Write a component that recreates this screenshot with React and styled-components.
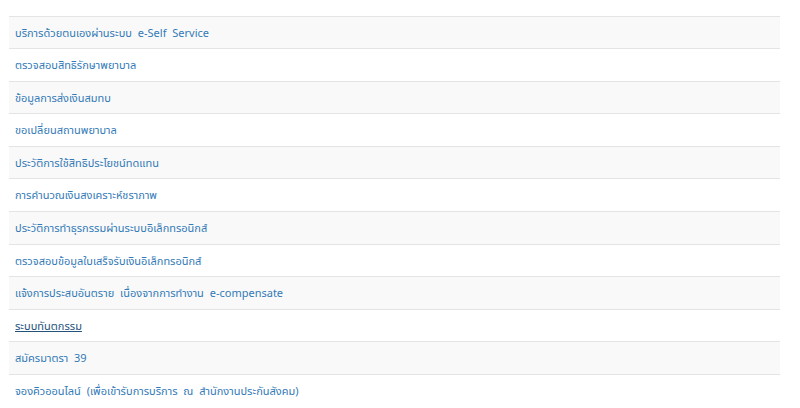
import React from "react";
import styled, { createGlobalStyle } from "styled-components";

const Global = createGlobalStyle`
  html, body { margin: 0; padding: 0; background: #fff; }
  body { font-family: "Noto Sans", "Noto Sans Thai", "Loma", sans-serif; }
`;

const Page = styled.div`
  padding: 15.5px 20px 0 9px;
`;

const List = styled.div`
  width: 771px;
  display: flex;
  flex-direction: column;
`;

const Row = styled.div`
  border-top: 1px solid #e4e4e4;
  background: ${(p) => (p.$odd ? "#f9f9f9" : "#ffffff")};
  padding: 8px 6px;
  line-height: 15.6px;
  font-size: 11px;
  word-spacing: 3px;
`;

const Link = styled.a`
  color: ${(p) => (p.$active ? "#23527c" : "#337ab7")};
  text-decoration: ${(p) => (p.$active ? "underline" : "none")};
  cursor: pointer;
`;

const items = [
  "บริการด้วยตนเองผ่านระบบ e-Self Service",
  "ตรวจสอบสิทธิรักษาพยาบาล",
  "ข้อมูลการส่งเงินสมทบ",
  "ขอเปลี่ยนสถานพยาบาล",
  "ประวัติการใช้สิทธิประโยชน์ทดแทน",
  "การคำนวณเงินสงเคราะห์ชราภาพ",
  "ประวัติการทำธุรกรรมผ่านระบบอิเล็กทรอนิกส์",
  "ตรวจสอบข้อมูลใบเสร็จรับเงินอิเล็กทรอนิกส์",
  "แจ้งการประสบอันตราย เนื่องจากการทำงาน e-compensate",
  "ระบบทันตกรรม",
  "สมัครมาตรา 39",
  "จองคิวออนไลน์ (เพื่อเข้ารับการบริการ ณ สำนักงานประกันสังคม)",
];

export default function App() {
  return (
    <>
      <Global />
      <Page>
        <List>
          {items.map((t, i) => (
            <Row key={t} $odd={i % 2 === 0}>
              <Link $active={i === 9}>{t}</Link>
            </Row>
          ))}
        </List>
      </Page>
    </>
  );
}
